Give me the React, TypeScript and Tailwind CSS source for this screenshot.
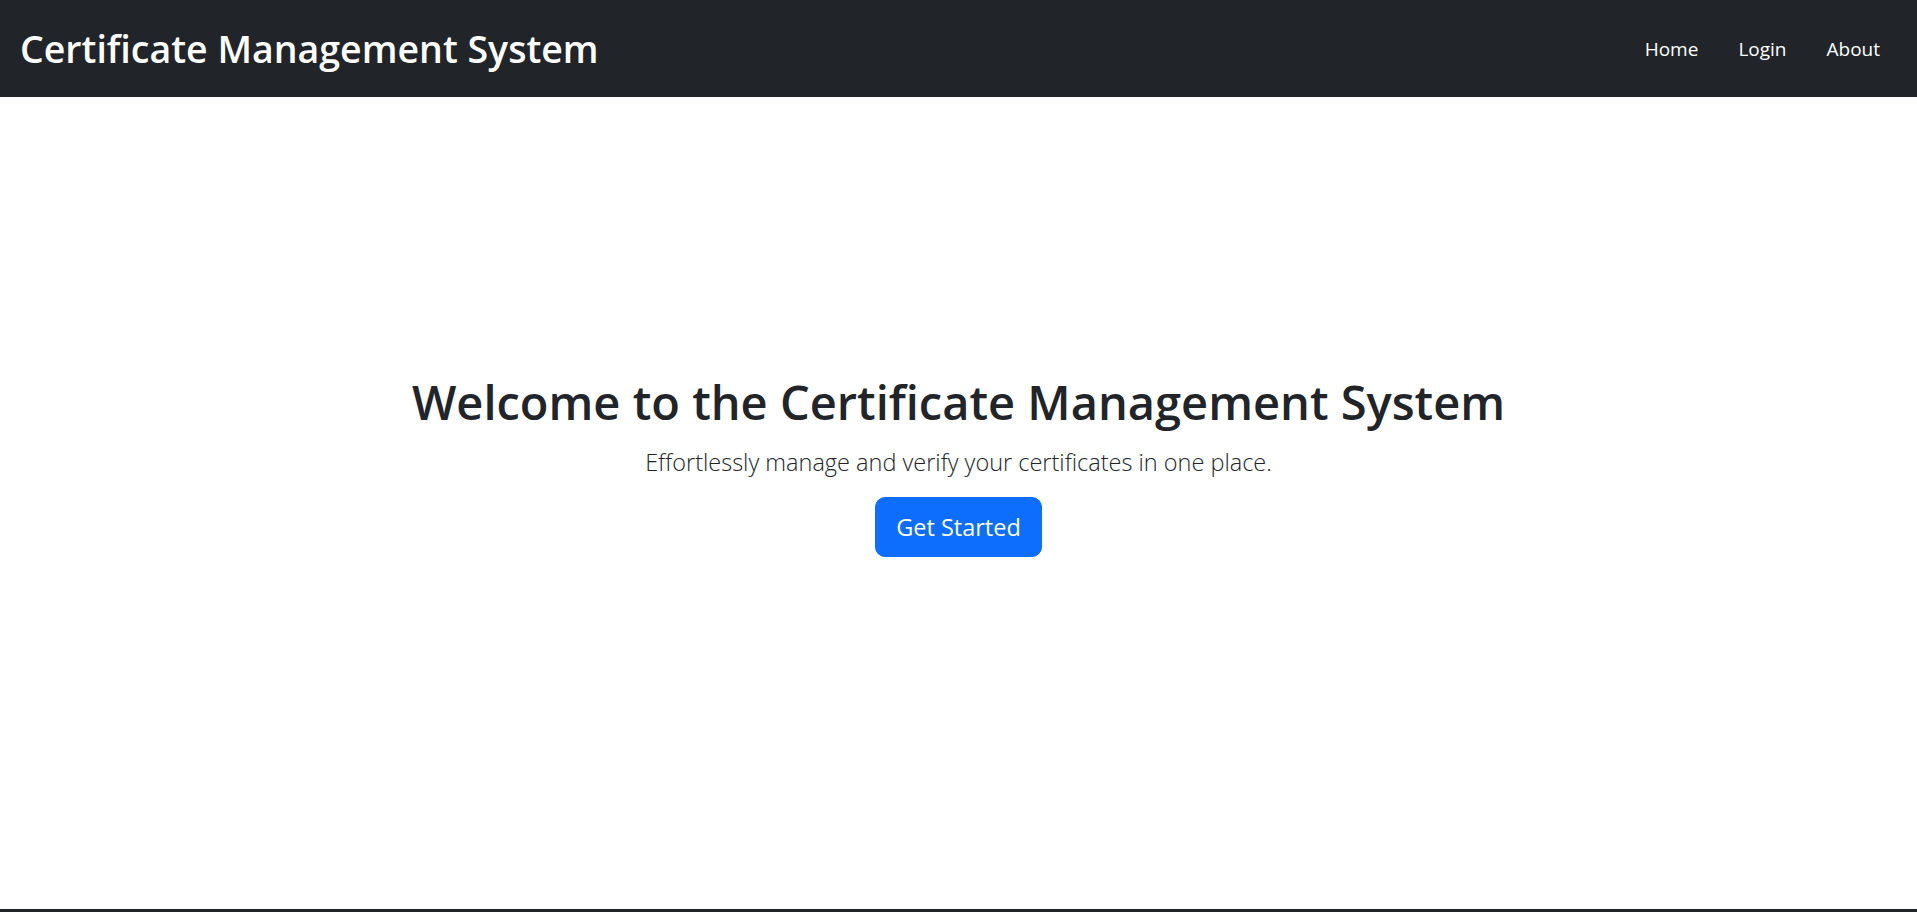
import React from 'react';

const font = { fontFamily: '"Open Sans", "Noto Sans", sans-serif' };

export default function App() {
  return (
    <div className="flex h-[912px] flex-col bg-white text-[#212529]" style={font}>
      {/* Navbar */}
      <nav className="flex h-[97px] shrink-0 items-center justify-between bg-[#212529] pl-[20px] pr-[17px]">
        <a className="text-[37.5px] font-semibold leading-none text-white">Certificate Management System</a>
        <ul className="flex items-center">
          {['Home', 'Login', 'About'].map((item) => (
            <li key={item}>
              <a className="block px-[20px] py-[10px] text-[19px] leading-[30px] text-white">{item}</a>
            </li>
          ))}
        </ul>
      </nav>

      {/* Hero */}
      <main className="flex flex-1 flex-col items-center pt-[276px] text-center">
        <h1 className="mb-[14px] text-[47px] font-semibold leading-[58px]">
          Welcome to the Certificate Management System
        </h1>
        <p className="mb-[17px] text-[23.5px] font-light leading-[35px]">
          Effortlessly manage and verify your certificates in one place.
        </p>
        <button className="rounded-[10px] border border-[#0d6efd] bg-[#0d6efd] px-[20px] py-[10px] text-[23.5px] leading-[38px] text-white">
          Get Started
        </button>
      </main>

      <footer className="h-[3px] shrink-0 bg-[#212529]" />
    </div>
  );
}
